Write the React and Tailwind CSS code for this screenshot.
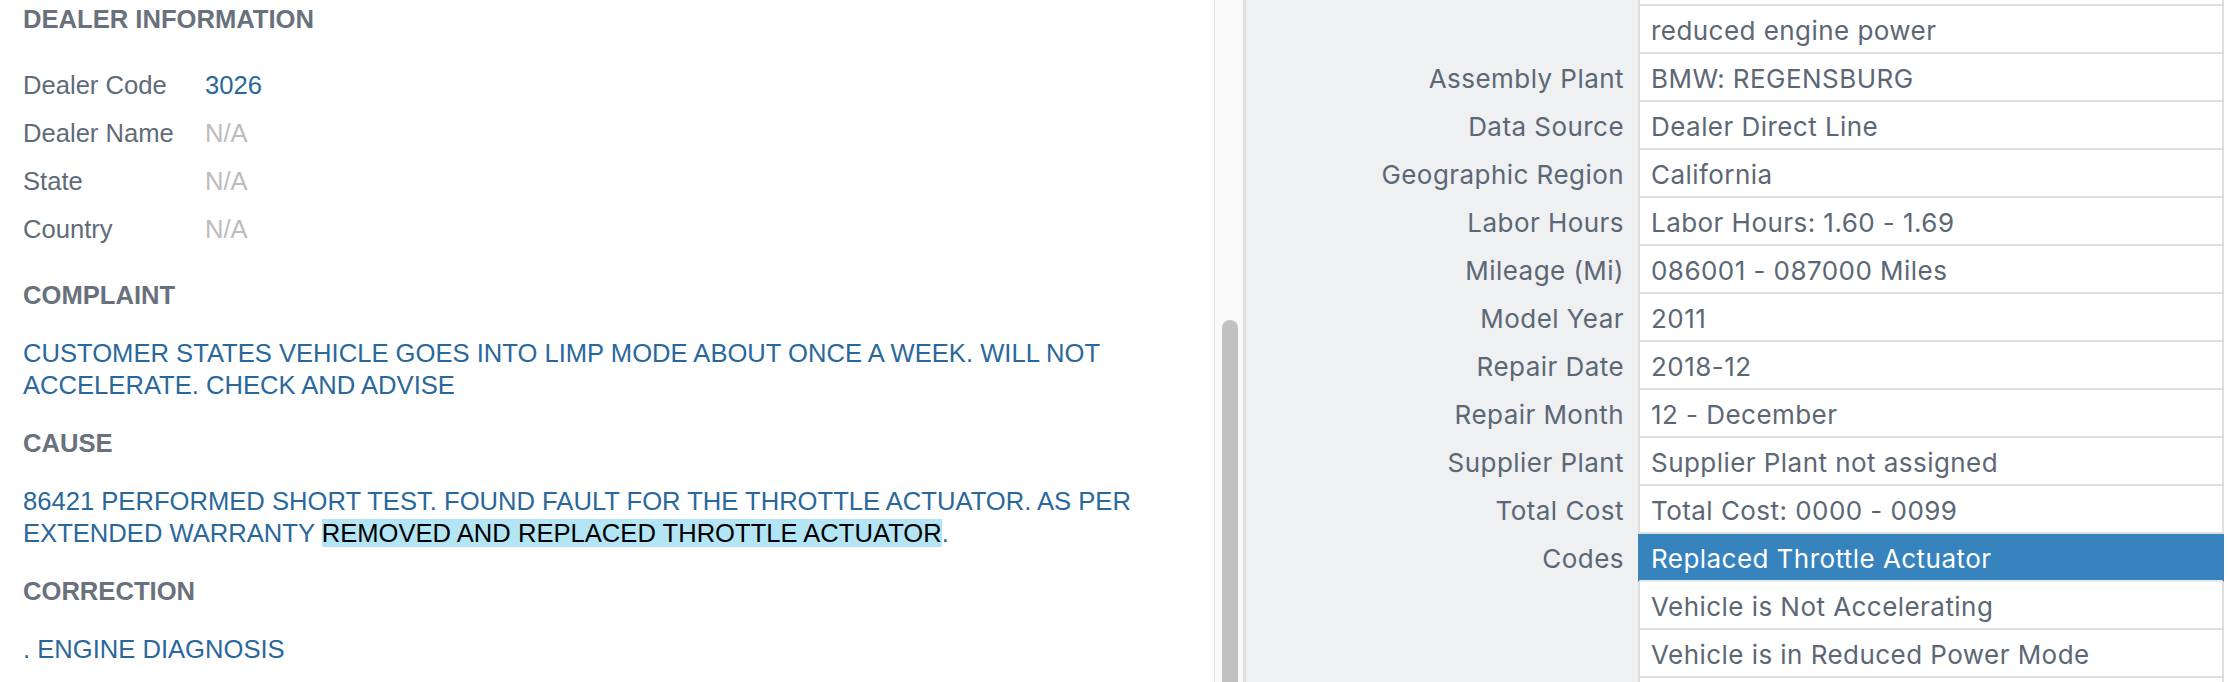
import React from 'react';

const dealer = [
  { label: 'Dealer Code', value: '3026', empty: false },
  { label: 'Dealer Name', value: 'N/A', empty: true },
  { label: 'State', value: 'N/A', empty: true },
  { label: 'Country', value: 'N/A', empty: true },
];

const details = [
  { label: '', value: 'reduced engine power' },
  { label: 'Assembly Plant', value: 'BMW: REGENSBURG' },
  { label: 'Data Source', value: 'Dealer Direct Line' },
  { label: 'Geographic Region', value: 'California' },
  { label: 'Labor Hours', value: 'Labor Hours: 1.60 - 1.69' },
  { label: 'Mileage (Mi)', value: '086001 - 087000 Miles' },
  { label: 'Model Year', value: '2011' },
  { label: 'Repair Date', value: '2018-12' },
  { label: 'Repair Month', value: '12 - December' },
  { label: 'Supplier Plant', value: 'Supplier Plant not assigned' },
  { label: 'Total Cost', value: 'Total Cost: 0000 - 0099' },
  { label: 'Codes', value: 'Replaced Throttle Actuator', selected: true },
  { label: '', value: 'Vehicle is Not Accelerating' },
  { label: '', value: 'Vehicle is in Reduced Power Mode' },
];

const Heading = ({ children }) => (
  <h3 className="font-bold text-[#69717d]">{children}</h3>
);

const App = () => {
  return (
    <div className="flex h-[682px] w-[2228px] overflow-hidden bg-white">
      {/* Claim text */}
      <div className="w-[1214px] shrink-0 pl-[23px] pr-[40px] pt-[3px] flex flex-col gap-[26px] font-['Liberation_Sans',Arial,sans-serif] text-[25.6px] leading-[32px]">
        <Heading>DEALER INFORMATION</Heading>

        <div className="flex flex-col">
          {dealer.map((d) => (
            <div key={d.label} className="flex h-[48px] leading-[48px]">
              <span className="w-[182px] shrink-0 text-[#5f6b78]">{d.label}</span>
              <span className={d.empty ? 'text-[#bcbcbc]' : 'text-[#2a689c]'}>{d.value}</span>
            </div>
          ))}
        </div>

        <Heading>COMPLAINT</Heading>
        <p className="text-[#2a689c]">
          CUSTOMER STATES VEHICLE GOES INTO LIMP MODE ABOUT ONCE A WEEK. WILL NOT ACCELERATE. CHECK AND ADVISE
        </p>

        <Heading>CAUSE</Heading>
        <p className="text-[#2a689c]">
          86421 PERFORMED SHORT TEST. FOUND FAULT FOR THE THROTTLE ACTUATOR. AS PER EXTENDED WARRANTY{' '}
          <span className="bg-[#b3e5f5] text-black">REMOVED AND REPLACED THROTTLE ACTUATOR</span>.
        </p>

        <Heading>CORRECTION</Heading>
        <p className="text-[#2a689c]">. ENGINE DIAGNOSIS</p>
      </div>

      {/* Scrollbar */}
      <div className="w-[32px] shrink-0 bg-[#f9f9f9] border-l border-l-[#e6e6e6] border-r-[3px] border-r-[#dfdfdf] pt-[320px] pl-[7px]">
        <div className="w-[16px] h-[500px] rounded-full bg-[#c1c1c1]" />
      </div>

      {/* Attributes table */}
      <div className="w-[978px] shrink-0 flex flex-col bg-[#eff0f2] font-['Inter',sans-serif] text-[26px] tracking-[0.45px] text-[#5c6776]">
        <div className="flex h-[6px] shrink-0">
          <div className="w-[392px] shrink-0" />
          <div className="flex-1 bg-white border-x-2 border-b-2 border-[#dedede]" />
        </div>
        {details.map((r, i) => (
          <div key={i} className="flex h-[48px] shrink-0">
            <div className="w-[392px] shrink-0 text-right pr-[14px] pt-[3px] leading-[43px] whitespace-nowrap">
              {r.label}
            </div>
            <div
              className={
                r.selected
                  ? 'flex-1 bg-[#3683be] text-white border-x-2 border-x-[#3683be] border-b-2 border-b-[#e8e8e8] pl-[11px] pt-[3px] leading-[43px] whitespace-nowrap'
                  : 'flex-1 bg-white border-x-2 border-b-2 border-[#dedede] pl-[11px] pt-[3px] leading-[43px] whitespace-nowrap'
              }
            >
              {r.value}
            </div>
          </div>
        ))}
        <div className="flex h-[4px] shrink-0">
          <div className="w-[392px] shrink-0" />
          <div className="flex-1 bg-white border-x-2 border-[#dedede]" />
        </div>
      </div>
      <div className="flex-1 bg-white" />
    </div>
  );
};

export default App;
